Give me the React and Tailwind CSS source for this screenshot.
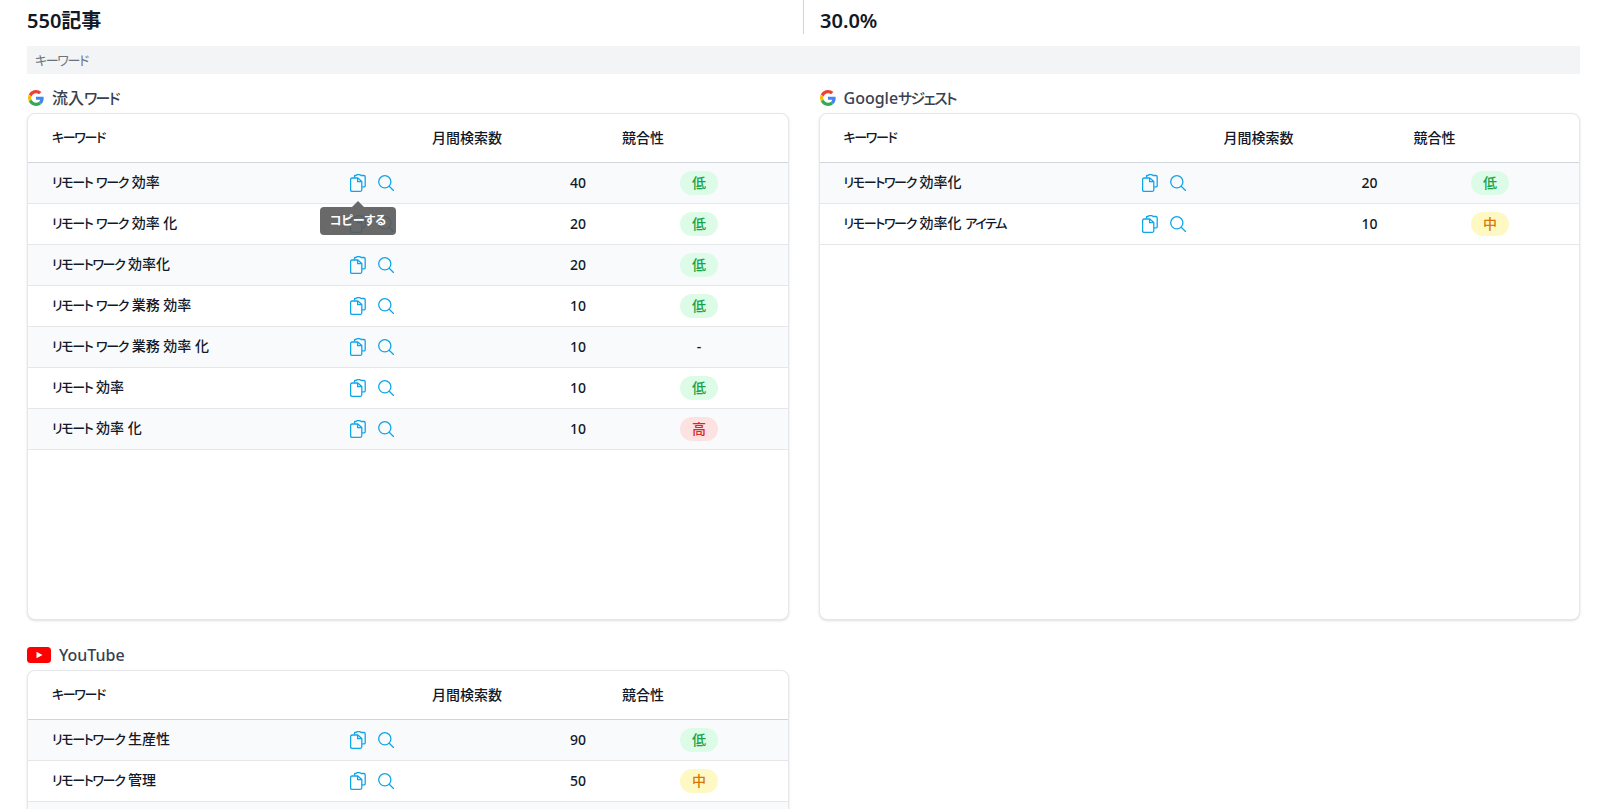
const sans = "font-['Noto_Sans','Noto_Sans_CJK_JP',sans-serif] [font-feature-settings:'palt']";

const badgeStyles = {
  低: "bg-[#dcfce7] text-[#16a34a]",
  中: "bg-[#fef9c3] text-[#d97706]",
  高: "bg-[#fee2e2] text-[#dc2626]",
};

const organic = [
  ["リモート ワーク 効率", 40, "低"],
  ["リモート ワーク 効率 化", 20, "低"],
  ["リモートワーク 効率化", 20, "低"],
  ["リモート ワーク 業務 効率", 10, "低"],
  ["リモート ワーク 業務 効率 化", 10, "-"],
  ["リモート 効率", 10, "低"],
  ["リモート 効率 化", 10, "高"],
];

const suggest = [
  ["リモートワーク 効率化", 20, "低"],
  ["リモートワーク 効率化 アイテム", 10, "中"],
];

const youtube = [
  ["リモートワーク 生産性", 90, "低"],
  ["リモートワーク 管理", 50, "中"],
  ["", null, ""],
];

// katakana is set narrower than kanji in the reference font
function Jp({ text }) {
  return text.split(/([\u30a0-\u30ff]+)/).map((part, i) =>
    i % 2 === 1 ? (
      <span key={i} className="text-[0.93em] tracking-[-0.105em]">{part}</span>
    ) : (
      part
    )
  );
}

function GoogleLogo() {
  return (
    <svg viewBox="0 0 48 48" className="w-4 h-4 shrink-0 ml-px">
      <path fill="#EA4335" d="M24 9.5c3.5 0 6.7 1.2 9.2 3.6l6.9-6.9C35.9 2.4 30.5 0 24 0 14.6 0 6.5 5.4 2.6 13.2l8 6.2C12.5 13.7 17.8 9.5 24 9.5z" />
      <path fill="#4285F4" d="M47 24.5c0-1.6-.1-3.1-.4-4.500H24v9h12.900c-.6 3-2.300 5.500-4.800 7.200l7.700 6C44.300 38 47 31.800 47 24.500z" />
      <path fill="#FBBC05" d="M10.500 28.600c-.5-1.400-.8-3-.8-4.600s.3-3.200.8-4.600l-8-6.200C.9 16.500 0 20.100 0 24s.9 7.500 2.600 10.800l7.900-6.200z" />
      <path fill="#34A853" d="M24 48c6.500 0 11.900-2.100 15.900-5.800l-7.700-6c-2.200 1.500-4.900 2.300-8.200 2.300-6.200 0-11.500-4.200-13.400-9.900l-8 6.200C6.500 42.600 14.600 48 24 48z" />
    </svg>
  );
}

function YoutubeLogo() {
  return (
    <svg viewBox="0 0 24 16" className="w-6 h-4 shrink-0">
      <rect width="24" height="16" rx="3.500" fill="#ff0000" />
      <path d="M9.500 4.800 15.500 8l-6 3.200z" fill="#fff" />
    </svg>
  );
}

function CopyIcon() {
  return (
    <svg viewBox="0 0 16 18" className="w-4 h-[18px]" fill="none" stroke="#0ea5e9" strokeWidth="1.300" strokeLinejoin="round">
      <path d="M4.500 3.500V2.200c0-.4.300-.7.700-.7h.8C6.300.800 7 .6 7.800.6h1.400c.8 0 1.500.3 1.800.9h2.800c.8 0 1.400.6 1.400 1.400v8.800c0 .7-.5 1.200-1.200 1.200h-1.900" />
      <path d="M2 4h5.800l4 3.600v8.200c0 .9-.6 1.500-1.400 1.500H2c-.8 0-1.400-.6-1.400-1.500V5.500C.6 4.600 1.200 4 2 4z" />
      <path d="M7.600 4.200v3.500h4" />
    </svg>
  );
}

function SearchIcon() {
  return (
    <svg viewBox="0 0 16 16" className="w-4 h-4" fill="none" stroke="#0ea5e9" strokeWidth="1.300" strokeLinecap="round">
      <circle cx="6.800" cy="6.800" r="6.100" />
      <path d="m11.200 11.200 4.300 4.300" />
    </svg>
  );
}

function Row({ keyword, volume, level, striped }) {
  return (
    <div className={`grid grid-cols-[380px_190px_1fr] h-[41px] items-center border-b border-[#e5e7eb] text-sm font-medium text-[#111827] ${striped ? "bg-[#f9fafb]" : "bg-white"}`}>
      <div className="flex items-center justify-between pl-6 pr-[14px] h-full">
        <span className="whitespace-nowrap mb-[2px]"><Jp text={keyword} /></span>
        {keyword && (
          <span className="flex items-center gap-3">
            <CopyIcon />
            <SearchIcon />
          </span>
        )}
      </div>
      <div className="text-right pr-[12px]">{volume}</div>
      <div className="flex justify-center pl-[12px]">
        {badgeStyles[level] ? (
          <span className={`w-[38px] h-6 rounded-full flex items-center justify-center ${badgeStyles[level]}`}>{level}</span>
        ) : (
          <span>{level}</span>
        )}
      </div>
    </div>
  );
}

function KeywordTable({ rows, className }) {
  return (
    <div className={`rounded-lg border border-[#e5e7eb] shadow-sm bg-white overflow-hidden ${className}`}>
      <div className="grid grid-cols-[380px_190px_1fr] h-[49px] items-center border-b border-[#d1d5db] text-sm font-medium text-[#111827]">
        <div className="pl-6 pb-[2px]"><Jp text="キーワード" /></div>
        <div className="pl-6">月間検索数</div>
        <div className="pl-6">競合性</div>
      </div>
      {rows.map(([keyword, volume, level], i) => (
        <Row key={i} keyword={keyword} volume={volume} level={level} striped={i % 2 === 0} />
      ))}
    </div>
  );
}

function Section({ logo, title, rows, className }) {
  return (
    <section className="min-w-0">
      <h3 className="flex items-center gap-2 h-[24px] mb-[3px] text-base font-medium text-[#374151]">
        {logo}
        <span><Jp text={title} /></span>
      </h3>
      <KeywordTable rows={rows} className={className} />
    </section>
  );
}

export default function App() {
  return (
    <div className={`h-screen overflow-hidden bg-white pl-[27px] pr-[23px] ${sans}`}>
      <div className="flex h-[34px] text-xl font-semibold text-[#111827]">
        <div className="w-[777px] h-full border-r border-[#d1d5db] flex items-center pt-[8px]">550記事</div>
        <div className="pl-[16px] flex items-center pt-[8px]">30.0%</div>
      </div>

      <div className="mt-[12px] h-[28px] bg-[#f3f4f6] flex items-center px-2 text-sm text-[#6b7280]"><span><Jp text="キーワード" /></span></div>

      <div className="mt-[12px] grid grid-cols-[762px_761px] gap-x-[29.5px] gap-y-[23px]">
        <Section logo={<GoogleLogo />} title="流入ワード" rows={organic} className="h-[507px]" />
        <Section logo={<GoogleLogo />} title="Googleサジェスト" rows={suggest} className="h-[507px]" />
        <Section logo={<YoutubeLogo />} title="YouTube" rows={youtube} />
      </div>

      <div className="absolute left-[320px] top-[207px] h-7 w-[76px] rounded bg-[#595959]/90 flex items-center justify-center text-xs font-semibold text-white">
        <span className="absolute -top-[6px] left-[32px] w-0 h-0 border-x-[6px] border-x-transparent border-b-[6px] border-b-[#595959]/90" />
        コピーする
      </div>
    </div>
  );
}
